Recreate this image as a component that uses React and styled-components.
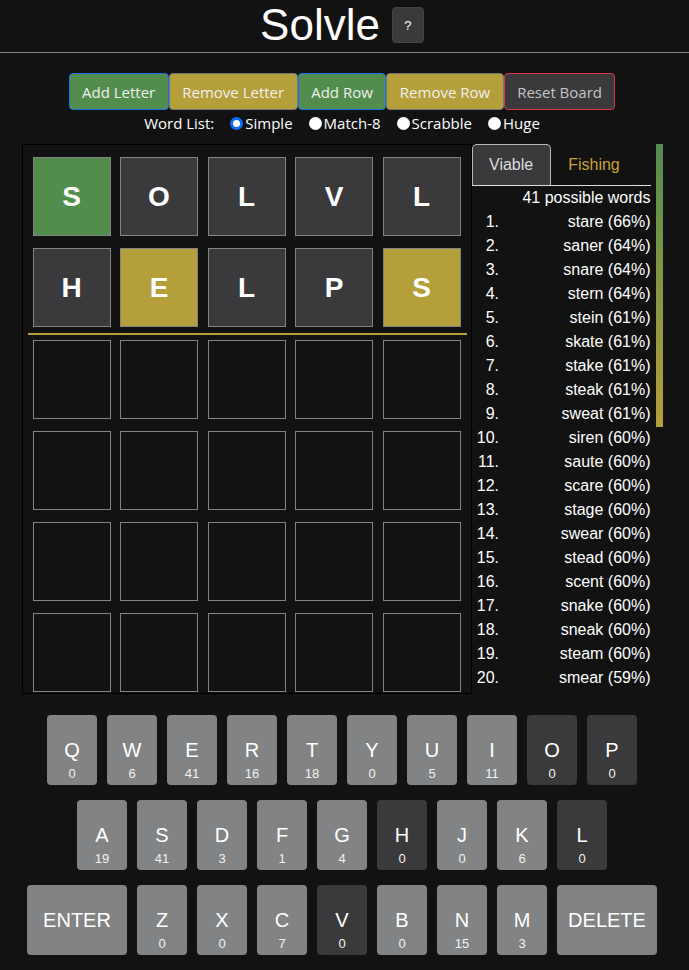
// Libraries.
import styled, { createGlobalStyle } from "styled-components";

// Data.
const GUESSES = [
 [
  ["S", "green"],
  ["O", "grey"],
  ["L", "grey"],
  ["V", "grey"],
  ["L", "grey"],
 ],
 [
  ["H", "grey"],
  ["E", "yellow"],
  ["L", "grey"],
  ["P", "grey"],
  ["S", "yellow"],
 ],
];

const WORDS = [
 "stare (66%)",
 "saner (64%)",
 "snare (64%)",
 "stern (64%)",
 "stein (61%)",
 "skate (61%)",
 "stake (61%)",
 "steak (61%)",
 "sweat (61%)",
 "siren (60%)",
 "saute (60%)",
 "scare (60%)",
 "stage (60%)",
 "swear (60%)",
 "stead (60%)",
 "scent (60%)",
 "snake (60%)",
 "sneak (60%)",
 "steam (60%)",
 "smear (59%)",
];

const KEYS = [
 [["Q", 0], ["W", 6], ["E", 41], ["R", 16], ["T", 18], ["Y", 0], ["U", 5], ["I", 11], ["O", 0, true], ["P", 0, true]],
 [["A", 19], ["S", 41], ["D", 3], ["F", 1], ["G", 4], ["H", 0, true], ["J", 0], ["K", 6], ["L", 0, true]],
 [["ENTER"], ["Z", 0], ["X", 0], ["C", 7], ["V", 0, true], ["B", 0], ["N", 15], ["M", 3], ["DELETE"]],
];

const TILE_COLORS = {
 green: "#538d4e",
 yellow: "#b59f3b",
 grey: "#3a3a3c",
 empty: "transparent",
};

const BUTTON_COLORS = {
 green: { bg: "#538d4e", border: "#1a6ff0", color: "#eeeeee" },
 yellow: { bg: "#b59f3b", border: "#777777", color: "#f0f0f0" },
 reset: { bg: "#3a3a3c", border: "#dc3545", color: "#c4c4c4" },
};

// Styles.
const GlobalStyle = createGlobalStyle`
 * {
  box-sizing: border-box;
 }

 body {
  margin: 0;
  background-color: #121212;
  color: #ffffff;
  font-family: "Liberation Sans", Arial, sans-serif;
 }
`;

const Page = styled.div`
 width: 689px;
 min-height: 970px;
`;

const Header = styled.header`
 display: flex;
 justify-content: center;
 align-items: flex-start;
 height: 53px;
 padding-right: 5px;
 border-bottom: 1px solid #8a8a8a;
`;

const Title = styled.h1`
 margin: 0;
 font-size: 44px;
 font-weight: 400;
 line-height: 50px;
 color: #ffffff;
`;

const HelpButton = styled.button`
 width: 32px;
 height: 36px;
 margin: 7px 0 0 12px;
 border: 1px solid #444446;
 border-radius: 4px;
 background-color: #3a3a3c;
 color: #ffffff;
 font-family: "Liberation Sans", Arial, sans-serif;
 font-size: 13px;
`;

const Content = styled.div`
 width: 684px;
 display: flex;
 flex-direction: column;
 align-items: center;
`;

const Toolbar = styled.div`
 display: flex;
 margin-top: 20px;
`;

const ActionButton = styled.button`
 height: 37px;
 padding: 0 12.5px;
 border: 1px solid ${({ $variant }) => BUTTON_COLORS[$variant].border};
 border-radius: 4px;
 background-color: ${({ $variant }) => BUTTON_COLORS[$variant].bg};
 color: ${({ $variant }) => BUTTON_COLORS[$variant].color};
 font-family: "Open Sans", sans-serif;
 font-size: 15px;
`;

const RadioRow = styled.div`
 display: flex;
 align-items: center;
 height: 26px;
 font-family: "Open Sans", sans-serif;
 font-size: 15px;
 color: #ffffff;
`;

const RadioLabel = styled.label`
 display: flex;
 align-items: center;
 gap: 2px;
 margin-left: 16px;
`;

const Radio = styled.input`
 appearance: none;
 width: 13px;
 height: 13px;
 margin: 0;
 border-radius: 50%;
 background-color: #ffffff;

 &:checked {
  border: 3px solid #0d6efd;
 }
`;

const Main = styled.div`
 display: flex;
 align-items: flex-start;
 margin-top: 8px;
`;

const Board = styled.div`
 display: flex;
 flex-direction: column;
 align-items: center;
 width: 450px;
 height: 550px;
 border: 1px solid #000000;
 overflow: hidden;
`;

const TileRow = styled.div`
 display: flex;
 gap: 9.5px;
 margin-top: 12px;
`;

const Tile = styled.div`
 display: flex;
 align-items: center;
 justify-content: center;
 width: 78px;
 height: 79px;
 border: 1px solid #818384;
 background-color: ${({ $state }) => TILE_COLORS[$state]};
 color: #ffffff;
 font-size: 28px;
 font-weight: 700;
`;

const Divider = styled.div`
 align-self: stretch;
 height: 2px;
 margin: 6px 4px -7px 5px;
 background-color: #b59f3b;
`;

const Panel = styled.div`
 width: 179px;
`;

const Tabs = styled.div`
 display: flex;
 height: 42px;
 border-bottom: 1px solid #dddddd;
`;

const Tab = styled.div`
 display: flex;
 align-items: center;
 padding: 0 16.5px;
 border: 1px solid ${({ $active }) => ($active ? "#b8b8b8" : "transparent")};
 border-bottom: none;
 border-radius: 5px 5px 0 0;
 background-color: ${({ $active }) => ($active ? "#3a3a3c" : "transparent")};
 color: ${({ $active }) => ($active ? "#dddddd" : "#c9a23a")};
 font-size: 16px;
`;

const Count = styled.div`
 text-align: right;
 font-size: 16px;
 line-height: 24px;
`;

const WordList = styled.ol`
 margin: 0;
 padding-left: 32px;
 font-size: 16px;
 line-height: 24px;

 & li {
  text-align: right;
 }
`;

const HeatBar = styled.div`
 width: 7px;
 height: 283px;
 margin-left: 5px;
 background: linear-gradient(#538d4e, #b59f3b);
`;

const Keyboard = styled.div`
 display: flex;
 flex-direction: column;
 align-items: center;
 gap: 15px;
 margin-top: 21px;
`;

const KeyRow = styled.div`
 display: flex;
 gap: 10px;
`;

const Key = styled.button`
 display: flex;
 flex-direction: column;
 align-items: center;
 justify-content: ${({ $wide }) => ($wide ? "center" : "flex-start")};
 width: ${({ $wide }) => ($wide ? "100px" : "50px")};
 height: 70px;
 padding: ${({ $wide }) => ($wide ? "0" : "24px 0 0")};
 border: none;
 border-radius: 4px;
 background-color: ${({ $absent }) => ($absent ? "#3a3a3c" : "#818384")};
 color: #ffffff;
 font-family: "Liberation Sans", Arial, sans-serif;
 font-size: 20px;
 line-height: 23px;
`;

const KeyCount = styled.span`
 margin-top: 4px;
 font-size: 13px;
 line-height: 15px;
 color: #f2f2f2;
`;

export default function App() {
 const emptyRows = [0, 1, 2, 3];

 return (
  <Page>
   <GlobalStyle />

   <Header>
    <Title>Solvle</Title>
    <HelpButton>?</HelpButton>
   </Header>

   <Content>
    <Toolbar>
     <ActionButton $variant="green">Add Letter</ActionButton>
     <ActionButton $variant="yellow">Remove Letter</ActionButton>
     <ActionButton $variant="green">Add Row</ActionButton>
     <ActionButton $variant="yellow">Remove Row</ActionButton>
     <ActionButton $variant="reset">Reset Board</ActionButton>
    </Toolbar>

    <RadioRow>
     <span>Word List:</span>
     <RadioLabel>
      <Radio type="radio" name="list" defaultChecked />
      Simple
     </RadioLabel>
     <RadioLabel>
      <Radio type="radio" name="list" />
      Match-8
     </RadioLabel>
     <RadioLabel>
      <Radio type="radio" name="list" />
      Scrabble
     </RadioLabel>
     <RadioLabel>
      <Radio type="radio" name="list" />
      Huge
     </RadioLabel>
    </RadioRow>

    <Main>
     <Board>
      {GUESSES.map((row, i) => (
       <TileRow key={i}>
        {row.map(([letter, state], j) => (
         <Tile key={j} $state={state}>
          {letter}
         </Tile>
        ))}
       </TileRow>
      ))}

      <Divider />

      {emptyRows.map((i) => (
       <TileRow key={i}>
        {[0, 1, 2, 3, 4].map((j) => (
         <Tile key={j} $state="empty" />
        ))}
       </TileRow>
      ))}
     </Board>

     <Panel>
      <Tabs>
       <Tab $active>Viable</Tab>
       <Tab>Fishing</Tab>
      </Tabs>
      <Count>41 possible words</Count>
      <WordList>
       {WORDS.map((word) => (
        <li key={word}>{word}</li>
       ))}
      </WordList>
     </Panel>

     <HeatBar />
    </Main>

    <Keyboard>
     {KEYS.map((row, i) => (
      <KeyRow key={i}>
       {row.map(([label, count, absent]) => (
        <Key key={label} $wide={count === undefined} $absent={absent}>
         <span>{label}</span>
         {count !== undefined && <KeyCount>{count}</KeyCount>}
        </Key>
       ))}
      </KeyRow>
     ))}
    </Keyboard>
   </Content>
  </Page>
 );
}
